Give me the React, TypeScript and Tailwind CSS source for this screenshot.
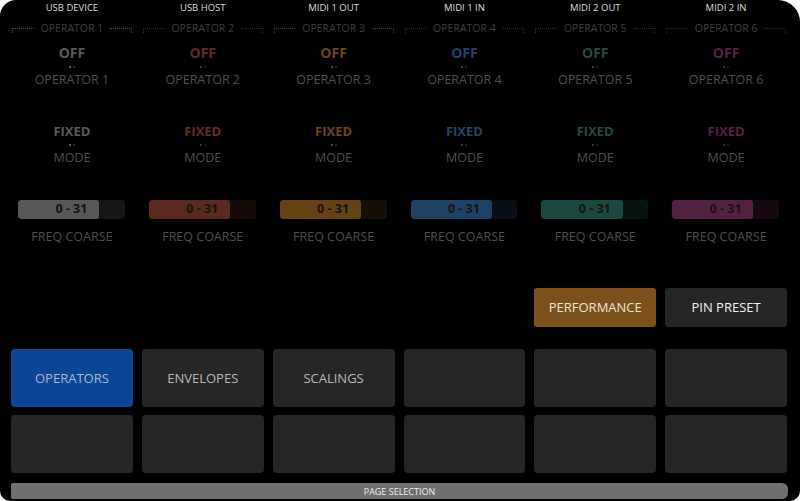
import React from "react";

type Col = {
  header: string;
  op: string;
  bracket: string;
  text: string;
  dot1: string;
  dot2: string;
  fill: string;
  track: string;
};

const cols: Col[] = [
  { header: "USB DEVICE", op: "OPERATOR 1", bracket: "border-[#505050]", text: "text-[#5a5a5a]", dot1: "bg-[#777777]", dot2: "bg-[#3a3a3a]", fill: "bg-[#585858]", track: "bg-[#161616]" },
  { header: "USB HOST", op: "OPERATOR 2", bracket: "border-[#52271f]", text: "text-[#662b20]", dot1: "bg-[#7a3526]", dot2: "bg-[#3e1c15]", fill: "bg-[#5a291f]", track: "bg-[#150b09]" },
  { header: "MIDI 1 OUT", op: "OPERATOR 3", bracket: "border-[#523a18]", text: "text-[#684616]", dot1: "bg-[#7d541c]", dot2: "bg-[#3f2c10]", fill: "bg-[#654313]", track: "bg-[#160f06]" },
  { header: "MIDI 1 IN", op: "OPERATOR 4", bracket: "border-[#20384e]", text: "text-[#224566]", dot1: "bg-[#2a5580]", dot2: "bg-[#163048]", fill: "bg-[#1d4264]", track: "bg-[#090f16]" },
  { header: "MIDI 2 OUT", op: "OPERATOR 5", bracket: "border-[#1e3e37]", text: "text-[#1e4d43]", dot1: "bg-[#255e52]", dot2: "bg-[#14332c]", fill: "bg-[#1b483e]", track: "bg-[#071411]" },
  { header: "MIDI 2 IN", op: "OPERATOR 6", bracket: "border-[#442137]", text: "text-[#572243]", dot1: "bg-[#6c2b55]", dot2: "bg-[#36162b]", fill: "bg-[#532242]", track: "bg-[#140910]" },
];

function Dots({ c }: { c: Col }) {
  return (
    <div className="flex justify-center gap-[2px] h-[2px]">
      <div className={`w-[2px] h-[2px] rounded-full ${c.dot1}`} />
      <div className={`w-[2px] h-[2px] rounded-full ${c.dot2}`} />
    </div>
  );
}

function Column({ c }: { c: Col }) {
  return (
    <div className="flex flex-col">
      <div className="h-[16px] flex items-center justify-center text-[9.5px] font-medium text-[#dcdcdc] leading-none">
        {c.header}
      </div>
      <div className="h-[24px] flex items-center px-[1px]">
        <div className={`flex-1 h-[5px] mt-[5px] border-t border-l border-dotted ${c.bracket}`} />
        <div className="px-[7px] text-[10.5px] text-[#3e3e3e] leading-none">{c.op}</div>
        <div className={`flex-1 h-[5px] mt-[5px] border-t border-r border-dotted ${c.bracket}`} />
      </div>
      <div className={`mt-[5px] h-[16px] flex items-center justify-center text-[14px] font-bold leading-none ${c.text}`}>OFF</div>
      <div className="mt-[5px]"><Dots c={c} /></div>
      <div className="mt-[4px] h-[16px] flex items-center justify-center text-[12.5px] text-[#4e4e4e] leading-none">{c.op}</div>
      <div className={`mt-[35px] h-[16px] flex items-center justify-center text-[13px] font-bold leading-none ${c.text}`}>FIXED</div>
      <div className="mt-[5px]"><Dots c={c} /></div>
      <div className="mt-[4px] h-[16px] flex items-center justify-center text-[12.5px] text-[#4e4e4e] leading-none">MODE</div>
      <div className="mt-[34px] pl-[7px] pr-[8px]">
        <div className={`relative h-[19px] rounded-[3px] overflow-hidden ${c.track}`}>
          <div className={`absolute left-0 top-0 bottom-0 w-[76%] rounded-[3px] ${c.fill}`} />
          <div className="absolute inset-0 flex items-center justify-center text-[12.5px] font-bold text-[#121212] leading-none">0 - 31</div>
        </div>
      </div>
      <div className="mt-[10px] h-[16px] flex items-center justify-center text-[12.5px] text-[#4e4e4e] leading-none">FREQ COARSE</div>
    </div>
  );
}

function Btn({ label, cls }: { label?: string; cls: string }) {
  return (
    <div className={`h-[58px] rounded-[4px] flex items-center justify-center text-[13px] leading-none ${cls}`}>
      {label}
    </div>
  );
}

export default function App() {
  return (
    <div className="w-[800px] h-[501px] bg-white" style={{ fontFamily: '"Open Sans", "Noto Sans", sans-serif' }}>
      <div className="w-full h-full bg-black rounded-tl-[16px] rounded-tr-[22px] rounded-bl-[10px] rounded-br-[10px] overflow-hidden flex flex-col pl-[11px] pr-[13px]">
        <div className="grid grid-cols-6 gap-x-[9px]">
          {cols.map((c) => (
            <Column key={c.header} c={c} />
          ))}
        </div>
        <div className="mt-[43px] grid grid-cols-6 gap-x-[9px]">
          <div className="col-start-5 h-[39px] rounded-[3px] bg-[#7c501a] flex items-center justify-center text-[13px] text-[#ece4da] leading-none">PERFORMANCE</div>
          <div className="h-[39px] rounded-[3px] bg-[#262626] flex items-center justify-center text-[13px] text-[#f0f0f0] leading-none">PIN PRESET</div>
        </div>
        <div className="mt-[22px] grid grid-cols-6 gap-x-[9px] gap-y-[8px]">
          <Btn label="OPERATORS" cls="bg-[#0a4596] text-[#aab8cc]" />
          <Btn label="ENVELOPES" cls="bg-[#262626] text-[#b8b8b8]" />
          <Btn label="SCALINGS" cls="bg-[#262626] text-[#b8b8b8]" />
          <Btn cls="bg-[#262626]" />
          <Btn cls="bg-[#262626]" />
          <Btn cls="bg-[#262626]" />
          <Btn cls="bg-[#262626]" />
          <Btn cls="bg-[#262626]" />
          <Btn cls="bg-[#262626]" />
          <Btn cls="bg-[#262626]" />
          <Btn cls="bg-[#262626]" />
          <Btn cls="bg-[#262626]" />
        </div>
        <div className="mt-[10px] h-[16px] mr-[-1px] rounded-l-[2px] rounded-r-[6px] bg-[#707070] flex items-center justify-center text-[9px] text-[#eeeeee] leading-none">
          PAGE SELECTION
        </div>
      </div>
    </div>
  );
}
